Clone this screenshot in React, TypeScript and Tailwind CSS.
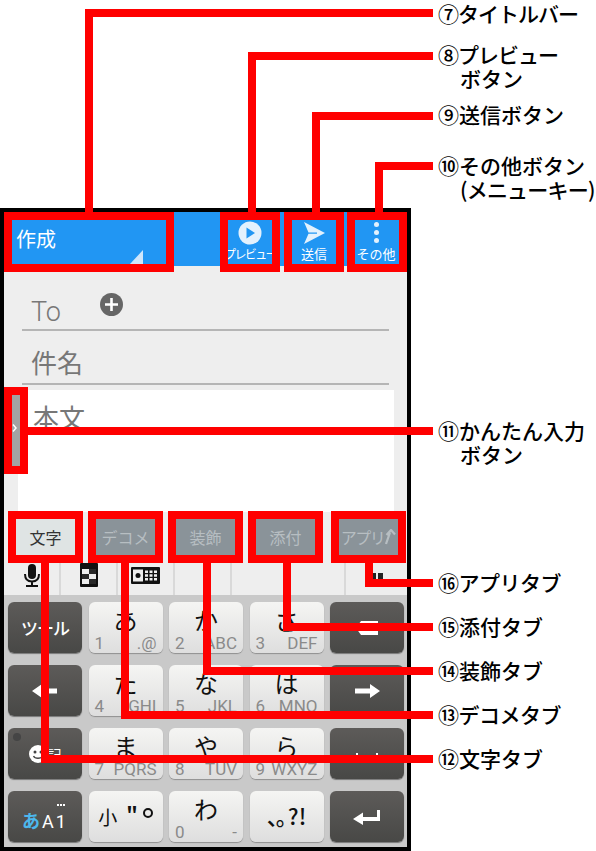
const jp = "font-['Noto_Sans_CJK_JP','Noto_Sans',sans-serif]";

function NumKey({ kana, num, sub }: { kana: string; num: string; sub: string }) {
  return (
    <div className="flex flex-col rounded-[6px] bg-gradient-to-b from-[#f5f5f3] to-[#dedede] shadow-[0_1px_1px_#8f8f8f] px-[6px]">
      <div className={`${jp} text-center text-[24px] leading-none text-[#111] mt-[6px] h-[26px]`}>{kana}</div>
      <div className="flex justify-between font-['Roboto',sans-serif] text-[17px] leading-[18px] text-[#8a8a8a]">
        <span>{num}</span>
        <span>{sub}</span>
      </div>
    </div>
  );
}

function FnKey({ children }: { children: React.ReactNode }) {
  return (
    <div className="relative flex items-center justify-center rounded-[6px] bg-gradient-to-b from-[#5d5b59] to-[#484846] shadow-[0_1px_1px_#777] text-white">
      {children}
    </div>
  );
}

function Tab({ label, active, children }: { label: string; active?: boolean; children?: React.ReactNode }) {
  return (
    <div
      className={`${jp} w-[59px] h-[36px] flex items-center justify-center whitespace-nowrap text-[16px] ${
        active ? 'bg-[#dfe4e4] text-[#333]' : 'bg-[#8a9399] text-[#b7bec2]'
      }`}
    >
      {label}
      {children}
    </div>
  );
}

function Label({ className, lines, tight, tight2 }: { className: string; lines: string[]; tight?: string; tight2?: string }) {
  return (
    <div className={`absolute left-[438px] ${jp} text-[21px] leading-[24px] font-medium text-black whitespace-nowrap ${className}`}>
      <div className={tight}>{lines[0]}</div>
      {lines[1] && <div className={`pl-[22px] ${tight2 ?? ''}`}>{lines[1]}</div>}
    </div>
  );
}

export default function App() {
  return (
    <div className="relative w-[596px] h-[851px] overflow-hidden bg-white">
      <div className="ml-0 mt-[208px] w-[411px] h-[643px] border-4 border-black flex flex-col bg-[#eee] absolute top-0 left-0">
        {/* Title bar */}
        <div className="h-[54px] shrink-0 bg-[#2196f3] flex text-white">
          <div className={`${jp} relative w-[159px] pl-[12px] pt-[11px] text-[20px] leading-[32px]`}>
            作成
            <svg className="absolute left-[125px] top-[37px]" width="15" height="16" viewBox="0 0 15 16">
              <path d="M14 1V15H1Z" fill="#cfe6fb" />
            </svg>
          </div>
          <div className={`${jp} flex-1 flex justify-end pr-[9px] gap-[19px]`}>
            <div className="w-[46px] flex flex-col items-center pt-[9px]">
              <svg width="24" height="24" viewBox="0 0 24 24">
                <circle cx="12" cy="12" r="11.5" fill="#e3f1fd" />
                <path d="M8.5 6.5 17 12 8.5 17.5Z" fill="#2196f3" />
              </svg>
              <div className="text-[12px] leading-[14px] mt-[2px] tracking-[-1.6px] whitespace-nowrap">プレビュー</div>
            </div>
            <div className="w-[44px] flex flex-col items-center pt-[9px]">
              <svg width="24" height="24" viewBox="0 0 24 24">
                <path d="M2 1 23 12 2 23 6.5 12.800H15V11.500H6.500Z" fill="#e3f1fd" />
              </svg>
              <div className="text-[13px] leading-[14px] mt-[2px] whitespace-nowrap">送信</div>
            </div>
            <div className="w-[44px] -ml-[1px] flex flex-col items-center pt-[10px]">
              <div className="flex flex-col gap-[3px] h-[23px]">
                <div className="w-[5px] h-[5px] rounded-full bg-[#e3f1fd]" />
                <div className="w-[5px] h-[5px] rounded-full bg-[#e3f1fd]" />
                <div className="w-[5px] h-[5px] rounded-full bg-[#e3f1fd]" />
              </div>
              <div className="text-[13px] leading-[14px] mt-[2px] whitespace-nowrap">その他</div>
            </div>
          </div>
        </div>

        {/* Form */}
        <div className="h-[246px] shrink-0 flex flex-col bg-[#eee]">
          <div className="mx-[18px] h-[65px] border-b-2 border-[#b5b5b5] flex items-end pl-[9px] text-[#777] font-['Roboto',sans-serif] text-[27px] leading-[34px]">
            <span className="w-[69px] font-light">To</span>
            <svg className="mb-[13px]" width="23" height="23" viewBox="0 0 23 23">
              <circle cx="11.5" cy="11.5" r="11.5" fill="#666" />
              <path d="M11.5 5v13M5 11.5h13" stroke="#fff" strokeWidth="2.6" />
            </svg>
          </div>
          <div className={`${jp} mx-[18px] h-[54px] border-b-2 border-[#b5b5b5] flex items-end pl-[9px] pb-[2px] text-[#777] text-[26px] leading-[38px]`}>
            件名
          </div>
          <div className={`${jp} ml-[14px] mr-[13px] mt-[5px] flex-1 bg-white pl-[15px] pt-[8px] text-[#777] text-[26px] leading-[38px]`}>
            本文
          </div>
        </div>

        {/* Tabs */}
        <div className="h-[51px] shrink-0 flex pl-[12px] pt-[7px] gap-[21px] bg-[#eee]">
          <Tab label="文字" active />
          <Tab label="デコメ" />
          <Tab label="装飾" />
          <Tab label="添付" />
          <div className="ml-[3px] tracking-[-1.5px]">
            <Tab label="アプリ">
              <svg className="ml-[1px] shrink-0" width="11" height="16" viewBox="0 0 11 16">
                <path d="M1 15 5 3.500M1.500 6 6 1l4 4.500" stroke="#b7bec2" strokeWidth="2.200" fill="none" />
              </svg>
            </Tab>
          </div>
        </div>

        {/* Tool row */}
        <div className="h-[32px] shrink-0 flex bg-[#eee]">
          <div className="w-[57px] border-r-2 border-[#d9d9d9] flex justify-center pt-[1px]">
            <svg width="18" height="24" viewBox="0 0 18 24">
              <rect x="5" y="0" width="8" height="15" rx="4" fill="#111" />
              <path d="M2 10c0 5 3 7.500 7 7.500s7-2.500 7-7.500M9 17.500V21M3 22h12" stroke="#111" strokeWidth="2" fill="none" />
            </svg>
          </div>
          <div className="w-[57px] border-r-2 border-[#d9d9d9] flex justify-center">
            <svg width="18" height="24" viewBox="0 0 18 24">
              <rect width="18" height="24" rx="1" fill="#111" />
              <path d="M2 6h7v5H2zM9 11h7v5H9zM2 16h7v5H2z" fill="#eee" />
              <path d="M9 6h7v5H9zM2 11h7v5H2zM9 16h7v5H9z" fill="#555" opacity="0.35" />
            </svg>
          </div>
          <div className="w-[57px] border-r-2 border-[#d9d9d9] flex justify-center pt-[4px]">
            <svg width="29" height="17" viewBox="0 0 29 17">
              <rect width="29" height="17" rx="1" fill="#111" />
              <rect x="2" y="2.500" width="10" height="12" fill="#eee" />
              <circle cx="7" cy="8.500" r="2.500" fill="#111" />
              <path d="M14 3.500h3v2.500h-3zM18.500 3.500h3v2.500h-3zM23 3.500h3v2.500h-3zM14 7.250h3v2.500h-3zM18.500 7.250h3v2.500h-3zM23 7.250h3v2.500h-3zM14 11h3v2.500h-3zM18.500 11h3v2.500h-3zM23 11h3v2.500h-3z" fill="#eee" />
            </svg>
          </div>
          <div className="w-[57px] border-r-2 border-[#d9d9d9]" />
          <div className="w-[114px] border-r-2 border-[#d9d9d9]" />
          <div className="flex-1 flex justify-center pt-[10px] gap-[2px]">
            <div className="w-[5px] h-[6px] bg-[#222]" />
            <div className="w-[5px] h-[6px] bg-[#222]" />
          </div>
        </div>

        {/* Keyboard */}
        <div className="flex-1 bg-[#c9c9c9] grid grid-cols-5 grid-rows-4 gap-x-[6.5px] gap-y-[12px] pl-[4px] pr-[3px] pt-[7px] pb-[5px]">
          <FnKey>
            <span className={`${jp} text-[17px] font-medium tracking-[-1px]`}>ツール</span>
          </FnKey>
          <NumKey kana="あ" num="1" sub=".@" />
          <NumKey kana="か" num="2" sub="ABC" />
          <NumKey kana="さ" num="3" sub="DEF" />
          <FnKey>
            <svg width="24" height="16" viewBox="0 0 24 16">
              <path d="M6 1H23V15H6L1 8Z" fill="#fff" />
            </svg>
          </FnKey>

          <FnKey>
            <svg width="26" height="14" viewBox="0 0 26 14">
              <path d="M0 7 10 0V4.500H25V9.500H10V14Z" fill="#fff" />
            </svg>
          </FnKey>
          <NumKey kana="た" num="4" sub="GHI" />
          <NumKey kana="な" num="5" sub="JKL" />
          <NumKey kana="は" num="6" sub="MNO" />
          <FnKey>
            <svg width="26" height="14" viewBox="0 0 26 14">
              <path d="M26 7 16 0V4.500H1V9.500H16V14Z" fill="#fff" />
            </svg>
          </FnKey>

          <FnKey>
            <div className="absolute left-[5px] top-[5px] w-[8px] h-[8px] rounded-full bg-[#454545]" />
            <div className={`${jp} flex items-center gap-[1px] text-[14px] leading-none`}>
              <svg width="18" height="18" viewBox="0 0 18 18">
                <circle cx="9" cy="9" r="9" fill="#fff" />
                <circle cx="6" cy="7" r="1.500" fill="#444" />
                <circle cx="12" cy="7" r="1.500" fill="#444" />
                <path d="M4.500 11c1.500 3 7.500 3 9 0" stroke="#444" strokeWidth="1.400" fill="none" />
              </svg>
              <span>記</span>
            </div>
          </FnKey>
          <NumKey kana="ま" num="7" sub="PQRS" />
          <NumKey kana="や" num="8" sub="TUV" />
          <NumKey kana="ら" num="9" sub="WXYZ" />
          <FnKey>
            <div className="mt-[3px] w-[22px] h-[4px] border-x-2 border-white" />
          </FnKey>

          <FnKey>
            <div className="absolute right-[17px] top-[13px] flex gap-[1px]">
              <div className="w-[2px] h-[2px] bg-white" />
              <div className="w-[2px] h-[2px] bg-white" />
              <div className="w-[2px] h-[2px] bg-white" />
            </div>
            <div className={`${jp} mt-[9px] flex items-baseline text-[18px] leading-none`}>
              <span className="text-[#4cb8ee] text-[18px] font-bold">あ</span>
              <span className="font-['Roboto',sans-serif] ml-[2px] tracking-[2px]">A1</span>
            </div>
          </FnKey>
          <div className={`${jp} flex items-center justify-center rounded-[6px] bg-gradient-to-b from-[#f5f5f3] to-[#dedede] shadow-[0_1px_1px_#8f8f8f] text-[#111] text-[19px] leading-none`}>
            <span>小</span>
            <span className="ml-[9px] -mt-[6px] font-bold text-[20px] leading-none">"</span>
            <div className="ml-[5px] -mt-[8px] w-[10px] h-[10px] rounded-full border-2 border-[#111]" />
          </div>
          <NumKey kana="わ" num="0" sub="-" />
          <div className={`${jp} flex items-baseline justify-center pt-[13px] rounded-[6px] bg-gradient-to-b from-[#f5f5f3] to-[#dedede] shadow-[0_1px_1px_#8f8f8f] text-[#111] text-[22px] leading-none font-medium`}>
            <span className="w-[9px] overflow-visible whitespace-nowrap">、</span>
            <span className="w-[12px] overflow-visible whitespace-nowrap">。</span>
            <span>?!</span>
          </div>
          <FnKey>
            <svg width="28" height="16" viewBox="0 0 28 16">
              <path d="M0 10 10 3.500V8H24V1H27V12H10V16Z" fill="#fff" />
            </svg>
          </FnKey>
        </div>
      </div>

      {/* Callout boxes */}
      <div className="absolute left-[4px] top-[212px] w-[170px] h-[60px] border-8 border-[#f00]" />
      <div className="absolute left-[220px] top-[212px] w-[60px] h-[60px] border-8 border-[#f00]" />
      <div className="absolute left-[284px] top-[212px] w-[60px] h-[60px] border-8 border-[#f00]" />
      <div className="absolute left-[347px] top-[212px] w-[60px] h-[60px] border-8 border-[#f00]" />
      <div className="absolute left-[4px] top-[387px] w-[24px] h-[87px] border-8 border-[#f00] bg-[#a3a3a3] flex items-center justify-start">
        <svg className="-ml-[3px] -mt-[6px] shrink-0" width="8" height="10" viewBox="0 0 8 10">
          <path d="M4 1.500 7 5 4 8.500" stroke="#fff" strokeWidth="1.500" fill="none" />
        </svg>
      </div>
      <div className="absolute left-[8px] top-[511px] w-[75px] h-[52px] border-8 border-[#f00]" />
      <div className="absolute left-[88px] top-[511px] w-[75px] h-[52px] border-8 border-[#f00]" />
      <div className="absolute left-[168px] top-[511px] w-[75px] h-[52px] border-8 border-[#f00]" />
      <div className="absolute left-[248px] top-[511px] w-[75px] h-[52px] border-8 border-[#f00]" />
      <div className="absolute left-[331px] top-[511px] w-[75px] h-[52px] border-8 border-[#f00]" />

      {/* Leader lines */}
      <div className="absolute left-[85px] top-[9px] w-[8px] h-[203px] bg-[#f00]" />
      <div className="absolute left-[85px] top-[9px] w-[348px] h-[8px] bg-[#f00]" />
      <div className="absolute left-[248px] top-[52px] w-[8px] h-[160px] bg-[#f00]" />
      <div className="absolute left-[248px] top-[52px] w-[185px] h-[8px] bg-[#f00]" />
      <div className="absolute left-[312px] top-[112px] w-[8px] h-[100px] bg-[#f00]" />
      <div className="absolute left-[312px] top-[112px] w-[121px] h-[8px] bg-[#f00]" />
      <div className="absolute left-[375px] top-[162px] w-[8px] h-[50px] bg-[#f00]" />
      <div className="absolute left-[375px] top-[162px] w-[58px] h-[8px] bg-[#f00]" />
      <div className="absolute left-[28px] top-[427px] w-[405px] h-[8px] bg-[#f00]" />
      <div className="absolute left-[365px] top-[563px] w-[8px] h-[24px] bg-[#f00]" />
      <div className="absolute left-[365px] top-[579px] w-[68px] h-[8px] bg-[#f00]" />
      <div className="absolute left-[283px] top-[563px] w-[8px] h-[68px] bg-[#f00]" />
      <div className="absolute left-[283px] top-[623px] w-[150px] h-[8px] bg-[#f00]" />
      <div className="absolute left-[203px] top-[563px] w-[8px] h-[112px] bg-[#f00]" />
      <div className="absolute left-[203px] top-[667px] w-[230px] h-[8px] bg-[#f00]" />
      <div className="absolute left-[121px] top-[563px] w-[8px] h-[156px] bg-[#f00]" />
      <div className="absolute left-[121px] top-[711px] w-[312px] h-[8px] bg-[#f00]" />
      <div className="absolute left-[41px] top-[563px] w-[8px] h-[200px] bg-[#f00]" />
      <div className="absolute left-[41px] top-[755px] w-[392px] h-[8px] bg-[#f00]" />

      {/* Labels */}
      <Label className="top-[1px] leading-[22px]" lines={['⑦タイトルバー']} tight="tracking-[-1px]" />
      <Label className="top-[42px]" lines={['⑧プレビュー', 'ボタン']} tight="tracking-[-1px]" />
      <Label className="top-[102px]" lines={['⑨送信ボタン']} />
      <Label className="top-[153px]" lines={['⑩その他ボタン', '(メニューキー)']} tight2="tracking-[-0.8px]" />
      <Label className="top-[418px] leading-[23px]" lines={['⑪かんたん入力', 'ボタン']} />
      <Label className="top-[570px]" lines={['⑯アプリタブ']} tight="tracking-[-0.5px]" />
      <Label className="top-[614px]" lines={['⑮添付タブ']} />
      <Label className="top-[658px]" lines={['⑭装飾タブ']} />
      <Label className="top-[702px]" lines={['⑬デコメタブ']} tight="tracking-[-0.5px]" />
      <Label className="top-[746px]" lines={['⑫文字タブ']} />
    </div>
  );
}
